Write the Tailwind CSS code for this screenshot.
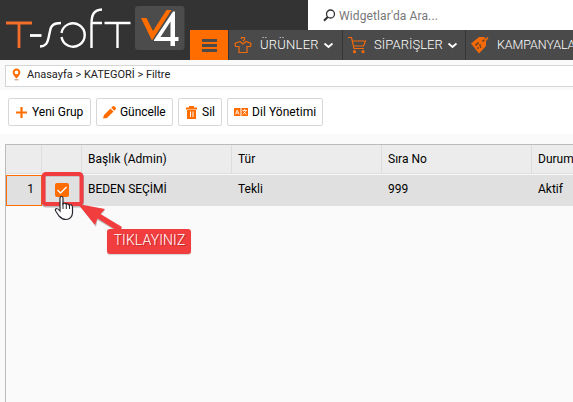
<!DOCTYPE html>
<html lang="tr">
<head>
<meta charset="utf-8">
<title>T-Soft V4</title>
<script src="https://cdn.jsdelivr.net/npm/@tailwindcss/browser@4"></script>
</head>
<body class="relative h-[402px] w-[573px] overflow-hidden bg-[#fafafa] font-[Roboto,'Liberation_Sans',sans-serif] text-[12px] text-black">
<header class="flex h-[60px] overflow-hidden bg-[#333]">
  <div class="w-[190px] shrink-0">
    <svg width="190" height="60" fill="none" stroke="#fff" stroke-width="2.4">
      <path d="M6 23H32M19 23V48" stroke="#f36f2b" stroke-width="2.8"/>
      <path d="M30 35.500H41.500" stroke-width="2.8"/>
      <path d="M40 46.500C46 46 47.500 43 48.500 38L50 31C51 25 54 23 61 23"/>
      <path d="M61.500 33A11.700 11.700 0 1 1 61.500 37"/>
      <path d="M91.500 48V24C91.500 14 94 10 102 9.500M91.500 23H102M104.500 23H130.500M117.500 23V48"/>
      <rect x="135" y="6" width="49.500" height="44" rx="3" fill="#4c4c4c" stroke="none"/>
      <path d="M141 18H146.500L153 31L166.500 10H171.500L152 40.500Z" fill="#ff6c00" stroke="none"/>
      <path fill-rule="evenodd" d="M173 11.500H175V37H178.500V41H175V46H170.500V41H154V40ZM170.500 21.500L160.500 37H170.500Z" fill="#fff" stroke="none"/>
    </svg>
  </div>
  <div class="flex min-w-0 flex-1 flex-col">
    <div class="ml-[118px] flex h-[30px] items-center bg-white pl-[15px] text-[12px] text-[#777]">
      <svg width="13" height="13" fill="none" stroke="#333"><circle cx="7.500" cy="5" r="4" stroke-width="1.300"/><path d="M4.700 8L1 11.700" stroke-width="2"/></svg>
      <span class="ml-[3px] whitespace-nowrap pt-px tracking-[0.120px]">Widgetlar'da Ara...</span>
    </div>
    <nav class="flex h-[30px] overflow-hidden bg-[#4a4a4a] text-[13px] text-white">
      <div class="w-[38px] shrink-0 bg-[#ff6c00]"><svg width="38" height="30" fill="#4a4a4a"><path d="M12 9H27V12H12ZM12 14H27V17H12ZM12 19H27V22H12Z"/></svg></div>
      <div class="flex w-[115px] shrink-0 items-center border-x border-[#353535] pl-[5px]">
        <svg width="18" height="18" fill="none" stroke="#f26a0a" stroke-width="1.200"><path d="M7.500 3V1.500H10.500V3.500L9 5M6 5.500L1 7.500L1.500 10.500H5V16.500H13V10.500H16.500L17 7.500L12 5.500L9 8L6 5.500"/></svg>
        <span class="ml-[8px] w-[60px] whitespace-nowrap font-light tracking-[0.250px]">ÜRÜNLER</span>
        <svg class="ml-[3px]" width="11" height="7" fill="none" stroke="#fff" stroke-width="1.700"><path d="M1.500 1.500L5.500 5L9.500 1.500"/></svg>
      </div>
      <div class="flex w-[123px] shrink-0 items-center border-r border-[#353535] pl-[5px]">
        <svg width="19" height="18" fill="none" stroke="#f26a0a" stroke-width="1.200"><path d="M0 1.500H3.500L6 12.500H16M4 5H17.500L15.500 10H5.500"/><circle cx="6.500" cy="15.700" r="1" fill="#f26a0a"/><circle cx="15" cy="15.700" r="1" fill="#f26a0a"/></svg>
        <span class="ml-[7px] w-[69px] whitespace-nowrap font-light tracking-[0.050px]">SİPARİŞLER</span>
        <svg class="ml-[4px]" width="11" height="7" fill="none" stroke="#fff" stroke-width="1.700"><path d="M1.500 1.500L5.500 5L9.500 1.500"/></svg>
      </div>
      <div class="flex min-w-0 flex-1 items-center overflow-hidden pl-[4px]">
        <svg class="shrink-0" width="20" height="20"><path d="M1 8.500L9 2H14.500L15 4L17.500 2L18.500 3L16 6V11L9 18.500Z" fill="#f26a0a"/><path d="M12 6H14V4.500M8 7V9H6V11M10 9V11L11 13M8 12V14" fill="none" stroke="#4a3527"/></svg>
        <span class="ml-[7px] whitespace-nowrap text-[12.500px] tracking-[-0.080px] font-light">KAMPANYALAR</span>
      </div>
    </nav>
  </div>
</header>
<div class="h-[30px] pt-[5px] pl-[5px]">
  <div class="flex h-[22px] items-center border border-r-0 border-[#d5d5d5] bg-white pl-[6px] text-[11px] text-[#222]">
    <svg class="mb-[3px]" width="9" height="13"><path fill-rule="evenodd" d="M4.500.500A3.800 3.800 0 0 1 8.300 4.500C8.300 7 4.500 10.500 4.500 10.500S.700 7 .700 4.500A3.800 3.800 0 0 1 4.500.500M4.500 2.500A1.900 1.900 0 1 0 4.500 6.300A1.900 1.900 0 0 0 4.500 2.500" fill="#ff6c00"/><path d="M2.500 11.800H6.500" stroke="#c98a60"/></svg>
    <span class="ml-[6px] whitespace-nowrap pb-[2px] tracking-[-0.020px]">Anasayfa &gt; KATEGORİ &gt; Filtre</span>
  </div>
</div>
<div class="flex h-[44px] gap-[5px] bg-white pt-[8px] pl-[8px] whitespace-nowrap">
  <button class="flex h-[28px] w-[83px] items-center rounded-[2px] border border-[#d8d8d8] pl-[7px]"><svg width="11" height="11"><path d="M5.500 0V11M0 5.500H11" stroke="#ff6c00" stroke-width="2.200"/></svg><span class="ml-[5px]">Yeni Grup</span></button>
  <button class="flex h-[28px] w-[77px] items-center rounded-[2px] border border-[#d8d8d8] pl-[6px]"><svg width="13" height="13" fill="#ff6c00"><path d="M0 12.500L1 9L7.500 2.500L10.500 5.500L4 12ZM8.300 1.700L10 0H11L13 2V3L11.300 4.700Z"/></svg><span class="ml-[4px] tracking-[-0.080px]">Güncelle</span></button>
  <button class="flex h-[28px] w-[44px] items-center rounded-[2px] border border-[#d8d8d8] pl-[7px]"><svg width="11" height="13"><path d="M0 1.500H3V0H8V1.500H11V3.500H0ZM1 4H10V13H1Z" fill="#ff6c00"/><path d="M4.500 5.500V11M7 5.500V11" stroke="#fff"/></svg><span class="ml-[5px]">Sil</span></button>
  <button class="flex h-[28px] w-[96px] items-center rounded-[2px] border border-[#d8d8d8] pl-[6px]"><svg width="14" height="8"><path d="M0 0H6.500V8H0ZM7.500 0H14V8H7.500Z" fill="#ff6c00"/><path d="M1.500 6.500L3.200 2L5 6.500M2 5H4.500M8.500 2.500H13M10.700 1V2.500M12 3L9 6.500M9.500 3.500L12.500 6.500" fill="none" stroke="#fff" stroke-width=".8"/></svg><span class="ml-[4px] tracking-[0.050px]">Dil Yönetimi</span></button>
</div>
<main class="mt-[10px] ml-[5px] h-[258px] overflow-hidden border-t border-l border-[#bbb] whitespace-nowrap">
  <div class="grid h-[29px] grid-cols-[36px_40px_150px_150px_150px_150px] border-b border-[#ddd] bg-[#ececec] leading-[28px]">
    <div class="border-r border-[#ddd]"></div><div class="border-r border-[#ddd]"></div>
    <div class="border-r border-[#ddd] pl-[6px] tracking-[0.050px]">Başlık (Admin)</div>
    <div class="border-r border-[#ddd] pl-[6px]">Tür</div>
    <div class="border-r border-[#ddd] pl-[6px]">Sıra No</div>
    <div class="pl-[6px]">Durum</div>
  </div>
  <div class="mt-px grid h-[31px] grid-cols-[36px_40px_150px_150px_150px_150px] bg-[#e0e0e0] leading-[28px]">
    <div class="h-[31px] w-[36px] border border-solid border-[#ff6c00] pr-[7px] text-right leading-[26px]">1</div><div></div>
    <div class="pl-[6px] tracking-[-0.050px]">BEDEN SEÇİMİ</div>
    <div class="pl-[6px]">Tekli</div>
    <div class="pl-[6px]">999</div>
    <div class="pl-[6px]">Aktif</div>
  </div>
</main>
<div class="absolute top-[183px] left-[55px] size-[14px] rounded-[2px] bg-[#ff6c00]"><svg width="14" height="14" fill="none" stroke="#fff" stroke-width="1.300"><path d="M2.500 7L5.500 10L11.500 4"/></svg></div>
<svg class="absolute top-[168px] left-[36px]" width="100" height="70" fill="none">
  <rect x="7.500" y="6.500" width="38.500" height="31" rx="2.500" stroke="#777" stroke-opacity=".5" stroke-width="4"/>
  <rect x="7.500" y="6" width="38" height="30" rx="2.500" stroke="#f23d40" stroke-width="4"/>
  <path d="M43 37L69 42.500L64.500 47L86 60L83 65L61.500 52L60 59Z" fill="#999" opacity=".6"/>
  <path d="M42 36L69 41L64.500 46L86 59L83 64L61.500 50.500L59 57Z" fill="#f23d3e"/>
  <path d="M24 43V30Q24 28.500 25.500 28.500T27 30V36Q28 34.500 30 36Q31 35 33 37Q36 36 36.500 39V45Q36 51 30 51.500Q26 51.500 23 48L20 43.500Q18.500 41 20.500 40.500Q22 40.500 24 43Z" fill="#fff" stroke="#27272f" stroke-width="1.200"/>
  <path d="M27 35V41M30.300 36V41M33.500 37V41" stroke="#27272f"/>
</svg>
<div class="absolute top-[229px] left-[107px] flex h-[25px] w-[84px] items-center justify-center rounded-[3px] bg-[#f23d3e] pb-[2px] pl-px text-[14px] font-light tracking-[0.100px] text-white shadow-[0_1px_1px_#9996] text-shadow-[1px_1px_0_#9c202099]">TIKLAYINIZ</div>
</body>
</html>
